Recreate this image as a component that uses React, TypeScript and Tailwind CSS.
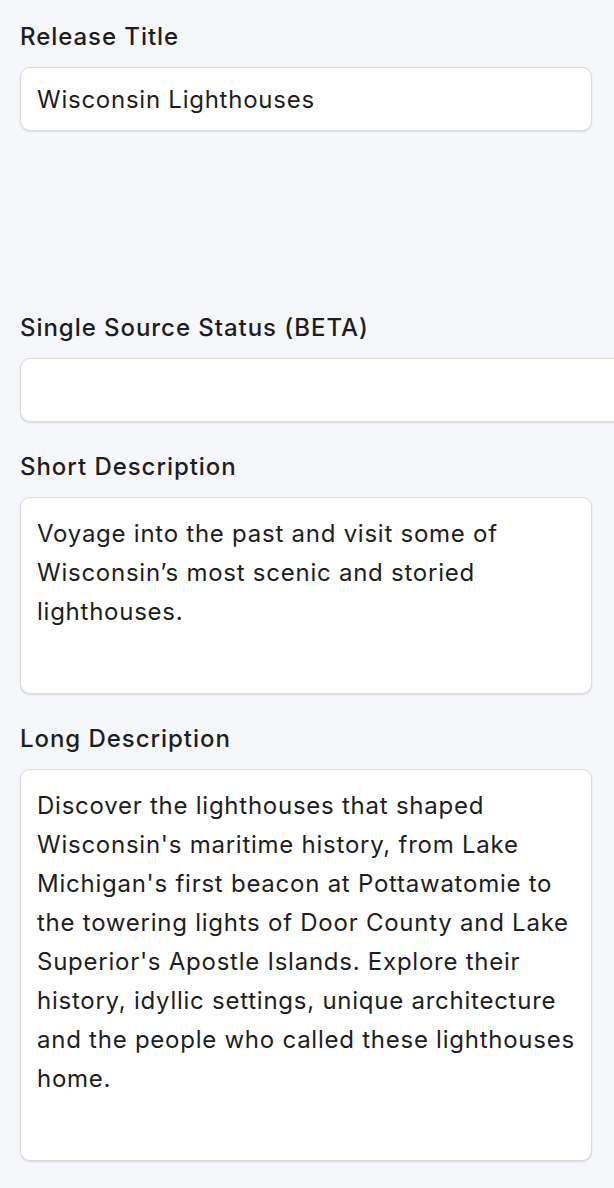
const fieldBox =
  'bg-white border border-[#d9dade] rounded-[10px] shadow-[0_1px_2px_rgba(0,0,0,0.12)] px-[16px] text-[24px] leading-[39px] tracking-[0.75px] text-[#1d1e22]'

const Label = ({ children }: { children: React.ReactNode }) => (
  <div className="text-[24px] leading-[30px] tracking-[0.95px] font-medium text-[#1d1e22] h-[30px] mb-[16px] pt-[1px]">{children}</div>
)

export default function App() {
  return (
    <div
      className="w-[614px] h-[1188px] overflow-hidden bg-[#f6f7fb] pt-[21px] pl-[20px]"
      style={{ fontFamily: 'Inter, "Noto Sans", sans-serif' }}
    >
      <div className="w-[572px]">
        <Label>Release Title</Label>
        <div className={`${fieldBox} h-[64px] flex items-center`}>Wisconsin Lighthouses</div>

        <div className="h-[181px]" />

        <Label>Single Source Status (BETA)</Label>
        <div className={`${fieldBox} h-[64px] w-[620px]`} />

        <div className="h-[29px]" />
        <Label>Short Description</Label>
        <div className={`${fieldBox} h-[197px] pt-[16px] whitespace-pre-line`}>
          {'Voyage into the past and visit some of\nWisconsin’s most scenic and storied\nlighthouses.'}
        </div>

        <div className="h-[29px]" />
        <Label>Long Description</Label>
        <div className={`${fieldBox} h-[392px] pt-[16px] whitespace-pre-line`}>
          {"Discover the lighthouses that shaped\nWisconsin's maritime history, from Lake\nMichigan's first beacon at Pottawatomie to\nthe towering lights of Door County and Lake\nSuperior's Apostle Islands. Explore their\nhistory, idyllic settings, unique architecture\nand the people who called these lighthouses\nhome."}
        </div>
      </div>
    </div>
  )
}
